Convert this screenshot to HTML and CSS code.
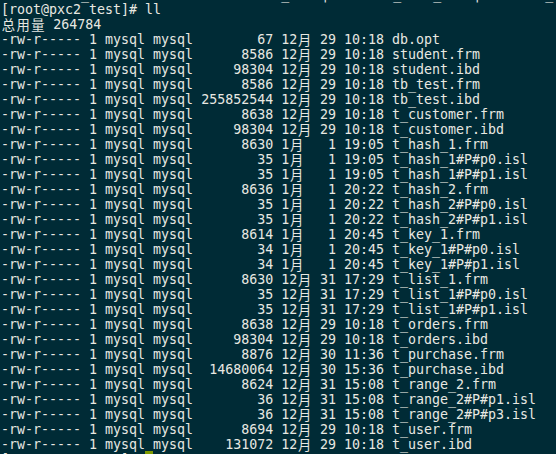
FILE: index.html
```html
<!DOCTYPE html>
<html>
<head>
<meta charset="utf-8">
<link rel="stylesheet" href="styles.css">
</head>
<body>
<div class="term">
<pre class="out"><span class="prev">          _                        _    |        _    _    |        _</span>
[root@pxc2 test]# ll
<span class="w">总</span><span class="w">用</span><span class="w">量</span> 264784
-rw-r----- 1 mysql mysql        67 12<span class="w">月</span> 29 10:18 db.opt
-rw-r----- 1 mysql mysql      8586 12<span class="w">月</span> 29 10:18 student.frm
-rw-r----- 1 mysql mysql     98304 12<span class="w">月</span> 29 10:18 student.ibd
-rw-r----- 1 mysql mysql      8586 12<span class="w">月</span> 29 10:18 tb_test.frm
-rw-r----- 1 mysql mysql 255852544 12<span class="w">月</span> 29 10:18 tb_test.ibd
-rw-r----- 1 mysql mysql      8638 12<span class="w">月</span> 29 10:18 t_customer.frm
-rw-r----- 1 mysql mysql     98304 12<span class="w">月</span> 29 10:18 t_customer.ibd
-rw-r----- 1 mysql mysql      8630 1<span class="w">月</span>   1 19:05 t_hash_1.frm
-rw-r----- 1 mysql mysql        35 1<span class="w">月</span>   1 19:05 t_hash_1#P#p0.isl
-rw-r----- 1 mysql mysql        35 1<span class="w">月</span>   1 19:05 t_hash_1#P#p1.isl
-rw-r----- 1 mysql mysql      8636 1<span class="w">月</span>   1 20:22 t_hash_2.frm
-rw-r----- 1 mysql mysql        35 1<span class="w">月</span>   1 20:22 t_hash_2#P#p0.isl
-rw-r----- 1 mysql mysql        35 1<span class="w">月</span>   1 20:22 t_hash_2#P#p1.isl
-rw-r----- 1 mysql mysql      8614 1<span class="w">月</span>   1 20:45 t_key_1.frm
-rw-r----- 1 mysql mysql        34 1<span class="w">月</span>   1 20:45 t_key_1#P#p0.isl
-rw-r----- 1 mysql mysql        34 1<span class="w">月</span>   1 20:45 t_key_1#P#p1.isl
-rw-r----- 1 mysql mysql      8630 12<span class="w">月</span> 31 17:29 t_list_1.frm
-rw-r----- 1 mysql mysql        35 12<span class="w">月</span> 31 17:29 t_list_1#P#p0.isl
-rw-r----- 1 mysql mysql        35 12<span class="w">月</span> 31 17:29 t_list_1#P#p1.isl
-rw-r----- 1 mysql mysql      8638 12<span class="w">月</span> 29 10:18 t_orders.frm
-rw-r----- 1 mysql mysql     98304 12<span class="w">月</span> 29 10:18 t_orders.ibd
-rw-r----- 1 mysql mysql      8876 12<span class="w">月</span> 30 11:36 t_purchase.frm
-rw-r----- 1 mysql mysql  14680064 12<span class="w">月</span> 30 15:36 t_purchase.ibd
-rw-r----- 1 mysql mysql      8624 12<span class="w">月</span> 31 15:08 t_range_2.frm
-rw-r----- 1 mysql mysql        36 12<span class="w">月</span> 31 15:08 t_range_2#P#p1.isl
-rw-r----- 1 mysql mysql        36 12<span class="w">月</span> 31 15:08 t_range_2#P#p3.isl
-rw-r----- 1 mysql mysql      8694 12<span class="w">月</span> 29 10:18 t_user.frm
-rw-r----- 1 mysql mysql    131072 12<span class="w">月</span> 29 10:18 t_user.ibd
[root@pxc2 test]# <span class="cursor"> </span></pre>
</div>
</body>
</html>
```
FILE: styles.css
```css
html, body {
  margin: 0;
  padding: 0;
  background: #002b36;
  height: 100%;
  overflow: hidden;
}

.term {
  padding: 2px 0 0 1px;
  margin-top: -15px;
}

.out {
  margin: 0;
  font-family: "DejaVu Sans Mono", "Noto Sans CJK SC", monospace;
  font-size: 13.3px;
  line-height: 15px;
  color: #e8e8e2;
  white-space: pre;
}

.w {
  display: inline-block;
  width: 2ch;
  text-align: center;
  font-family: "Noto Sans CJK SC", "DejaVu Sans Mono", sans-serif;
  line-height: 15px;
  vertical-align: top;
}

.cursor {
  display: inline-block;
  width: 1ch;
  height: 15px;
  background: #7f9a00;
  vertical-align: top;
  position: relative;
  top: -1px;
}
```
